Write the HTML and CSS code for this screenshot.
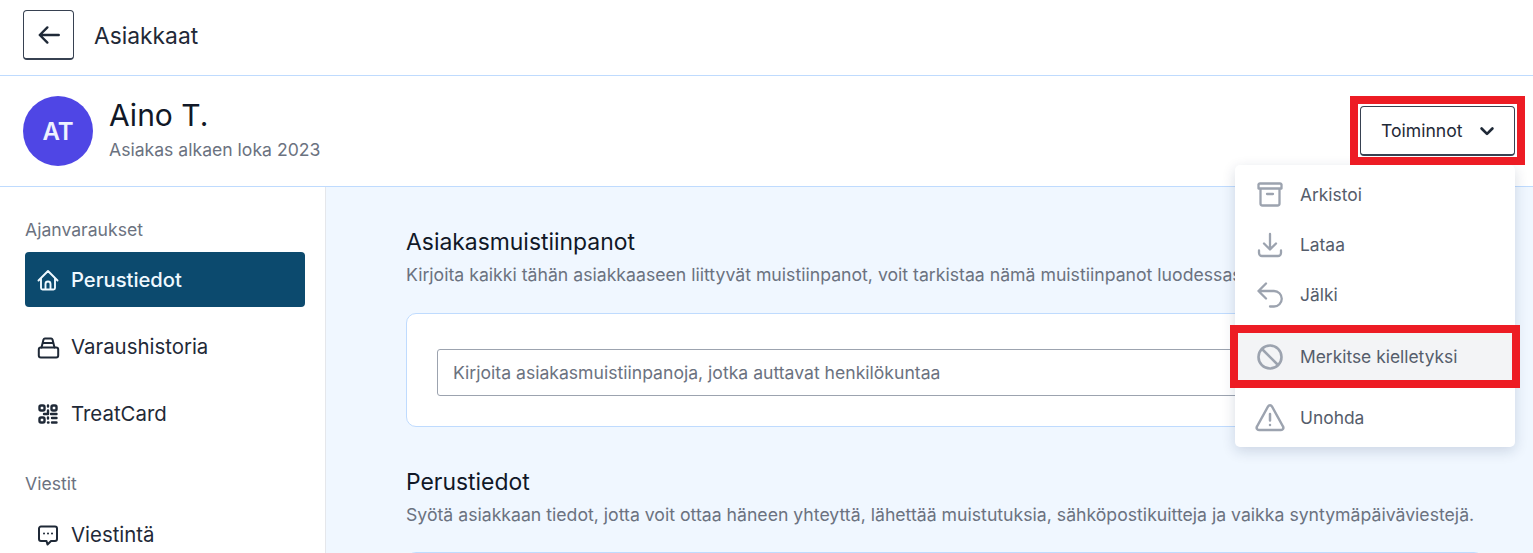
FILE: index.html
```html
<!DOCTYPE html>
<html lang="fi">
<head>
<meta charset="utf-8">
<title>Asiakkaat</title>
<link rel="stylesheet" href="styles.css">
</head>
<body>
<div class="page">
  <header class="topbar">
    <button class="back" type="button" aria-label="Takaisin">
      <svg width="26" height="26" viewBox="0 0 24 24" fill="none" stroke="currentColor" stroke-width="2.200" stroke-linecap="round" stroke-linejoin="round"><path d="M21 12H3.500M10.500 5l-7 7 7 7"/></svg>
    </button>
    <span class="topbar-title">Asiakkaat</span>
  </header>
  <section class="profile">
    <div class="avatar">AT</div>
    <div class="who">
      <div class="name">Aino T.</div>
      <div class="since">Asiakas alkaen loka 2023</div>
    </div>
    <button class="actions" type="button">Toiminnot
      <svg width="20" height="20" viewBox="0 0 24 24" fill="none" stroke="currentColor" stroke-width="3.200" stroke-linecap="round" stroke-linejoin="round"><path d="M5.500 9l6.500 6.500L18.500 9"/></svg>
    </button>
  </section>
  <div class="body">
    <nav class="side">
      <div class="side-label">Ajanvaraukset</div>
      <a class="side-item active">
        <svg width="24" height="24" viewBox="0 0 24 24" fill="none" stroke="currentColor" stroke-width="1.900" stroke-linecap="round" stroke-linejoin="round"><path d="M2.500 12.500L12 3l9.500 9.500M5 10.500V20a1.500 1.500 0 0 0 1.500 1.500h11A1.500 1.500 0 0 0 19 20v-9.500M9.500 21.500V16a2.500 2.500 0 0 1 5 0v5.500"/></svg>
        Perustiedot</a>
      <a class="side-item">
        <svg width="24" height="24" viewBox="0 0 24 24" fill="none" stroke="currentColor" stroke-width="2" stroke-linecap="round" stroke-linejoin="round"><rect x="2.800" y="12.500" width="19.400" height="10" rx="2"/><path d="M5.500 12.500L7.500 4.500a1.500 1.500 0 0 1 1.500-1h6a1.500 1.500 0 0 1 1.500 1l2 8M6.800 8h10.400"/></svg>
        Varaushistoria</a>
      <a class="side-item">
        <svg width="24" height="24" viewBox="0 0 24 24" fill="none" stroke="currentColor" stroke-width="2.400" stroke-linecap="round" stroke-linejoin="round"><rect x="3.500" y="3.500" width="5" height="5" rx="1.500"/><rect x="3.500" y="15.500" width="5" height="5" rx="1.500"/><rect x="15.500" y="3.500" width="5" height="5" rx="1.500"/><path d="M12 3.500v1M12 8.500V12H8M15 12h5.500M12 15.500v1M12 20.500h.5M16 16h4.500M16 20.500h4.500"/></svg>
        TreatCard</a>
      <div class="side-label second">Viestit</div>
      <a class="side-item">
        <svg width="24" height="24" viewBox="0 0 24 24" fill="none" stroke="currentColor" stroke-width="2" stroke-linecap="round" stroke-linejoin="round"><path d="M5 3.500h14a2 2 0 0 1 2 2V16a2 2 0 0 1-2 2h-4l-3.500 3.500-1-3.500H5a2 2 0 0 1-2-2V5.500a2 2 0 0 1 2-2z"/><path d="M8 10.500h.01M12 10.500h.01M16 10.500h.01"/></svg>
        Viestintä</a>
    </nav>
    <main class="main">
      <h2 class="section-title">Asiakasmuistiinpanot</h2>
      <p class="section-desc">Kirjoita kaikki tähän asiakkaaseen liittyvät muistiinpanot, voit tarkistaa nämä muistiinpanot luodessasi ajanvarausta.</p>
      <div class="card">
        <div class="input">Kirjoita asiakasmuistiinpanoja, jotka auttavat henkilökuntaa</div>
      </div>
      <h2 class="section-title">Perustiedot</h2>
      <p class="section-desc">Syötä asiakkaan tiedot, jotta voit ottaa häneen yhteyttä, lähettää muistutuksia, sähköpostikuitteja ja vaikka syntymäpäiväviestejä.</p>
      <div class="card card-next"></div>
    </main>
  </div>

  <div class="menu">
    <div class="menu-item">
      <svg width="32" height="32" viewBox="0 0 32 32" fill="none" stroke="currentColor" stroke-width="2.300" stroke-linecap="round" stroke-linejoin="round"><path d="M4.500 5.500a1.500 1.500 0 0 1 1.500-1h20a1.500 1.500 0 0 1 1.500 1V9.500h-23zM6.500 9.500V24.500a2 2 0 0 0 2 2h15a2 2 0 0 0 2-2V9.500M13 15h6"/></svg>
      Arkistoi</div>
    <div class="menu-item">
      <svg width="32" height="32" viewBox="0 0 32 32" fill="none" stroke="currentColor" stroke-width="2.300" stroke-linecap="round" stroke-linejoin="round"><path d="M16 5v15.500M10 14.500l6 6 6-6M5 21.500v2.500a3 3 0 0 0 3 3h16a3 3 0 0 0 3-3v-2.500"/></svg>
      Lataa</div>
    <div class="menu-item">
      <svg width="32" height="32" viewBox="0 0 32 32" fill="none" stroke="currentColor" stroke-width="2.300" stroke-linecap="round" stroke-linejoin="round"><path d="M12 4.500L4.500 12l7.500 7.500M4.500 12H20a7.500 7.500 0 0 1 0 15.500h-4"/></svg>
      Jälki</div>
    <div class="menu-item hover group-start">
      <svg width="32" height="32" viewBox="0 0 32 32" fill="none" stroke="currentColor" stroke-width="2.600" stroke-linecap="round" stroke-linejoin="round"><circle cx="16" cy="16" r="11.500"/><path d="M8 8l16 16"/></svg>
      Merkitse kielletyksi</div>
    <div class="menu-item group-next">
      <svg width="32" height="32" viewBox="0 0 32 32" fill="none" stroke="currentColor" stroke-width="2.500" stroke-linecap="round" stroke-linejoin="round"><path d="M14 4.500a2.300 2.300 0 0 1 4 0l11 20a2.300 2.300 0 0 1-2 3.500H5a2.300 2.300 0 0 1-2-3.500zM16 12v6.500M16 23v.01"/></svg>
      Unohda</div>
  </div>
  <div class="mark mark-actions"></div>
  <div class="mark mark-ban"></div>
</div>
</body>
</html>
```
FILE: styles.css
```css
* { box-sizing: border-box; }
html, body { margin: 0; padding: 0; }
body { font-family: Inter, "Liberation Sans", sans-serif; color: #111827; background: #fff; }
.page { position: relative; width: 1533px; height: 553px; overflow: hidden; }
.topbar { height: 76px; display: flex; align-items: center; gap: 20px; padding: 0 0 5px 23px; border-bottom: 1px solid #bfdbfe; }
.back { width: 51px; height: 50px; display: flex; align-items: center; justify-content: center; padding: 0; color: #1f2937; background: #fff; border: 1px solid #374151; border-bottom-width: 2px; border-radius: 4px; }
.topbar-title { font-size: 22.800px; color: #1f2937; }
.profile { height: 111px; display: flex; align-items: center; padding: 0 18px 0 23px; border-bottom: 1px solid #bfdbfe; }
.avatar { width: 70px; height: 70px; border-radius: 50%; background: #4f46e5; color: #eef2ff; font-size: 24px; font-weight: 600; display: flex; align-items: center; justify-content: center; }
.who { margin: 0 0 3px 16px; flex: 1; }
.name { font-size: 30px; line-height: 36px; color: #111827; }
.since { font-size: 17.600px; line-height: 24px; margin-top: 5px; color: #6b7280; }
.actions { width: 155px; height: 50px; display: flex; align-items: center; gap: 14px; font: 400 17.600px Inter, sans-serif; color: #1f2937; background: #fff; border: 1px solid #374151; border-bottom-width: 2px; border-radius: 4px; padding: 0 0 0 20px; }
.body { display: flex; height: 366px; }
.side { width: 326px; flex: none; padding: 32px 20px 0 25px; border-right: 1px solid #e5e7eb; }
.side-label { font-size: 17.600px; line-height: 22px; color: #6b7280; }
.side-label.second { margin-top: 32px; }
.side-item { height: 55px; display: flex; align-items: center; gap: 11px; padding-left: 11px; margin-top: 12px; font-size: 20.400px; color: #1f2937; border-radius: 4px; }
.side-item.active { margin-top: 11px; background: #0c4a6e; color: #f0f9ff; font-size: 20.200px; font-weight: 500; }
.main { flex: 1; background: #f0f7ff; padding: 42px 0 0 80px; min-width: 0; }
.section-title { margin: 0; font-size: 22.900px; line-height: 26px; font-weight: 400; color: #111827; }
.section-desc { margin: 8px 0 0; font-size: 17.660px; line-height: 24px; color: #6b7280; white-space: nowrap; }
.card { width: 1078px; height: 114px; margin: 26px 0 42px; display: flex; align-items: center; padding: 5px 31px 0 30px; background: #fff; border: 1px solid #bfdbfe; border-radius: 10px; }
.card-next { margin-top: 25px; }
.input { flex: 1; height: 47px; display: flex; align-items: center; padding-left: 15px; font-size: 17.600px; color: #6b7280; background: #fff; border: 1px solid #9ca3af; border-radius: 3px; }
.menu { position: absolute; left: 1235px; top: 165px; width: 280px; height: 282px; padding: 5px 0 0; background: #fff; border-radius: 5px; box-shadow: 0 4px 14px rgba(15, 40, 80, .16); }
.menu-item { height: 50px; display: flex; align-items: center; gap: 14px; padding: 0 0 1px 19px; font-size: 17.400px; color: #555d6b; }
.menu-item svg { color: #9ca3af; flex: none; margin-top: 1px; }
.menu-item.hover { background: #f3f4f6; }
.group-start { margin-top: 12px; }
.group-next { margin-top: 11px; }
.mark { position: absolute; border: 8px solid #ed1c24; }
.mark-actions { left: 1350px; top: 96px; width: 175px; height: 69px; }
.mark-ban { left: 1230px; top: 325px; width: 290px; height: 63px; }
```
